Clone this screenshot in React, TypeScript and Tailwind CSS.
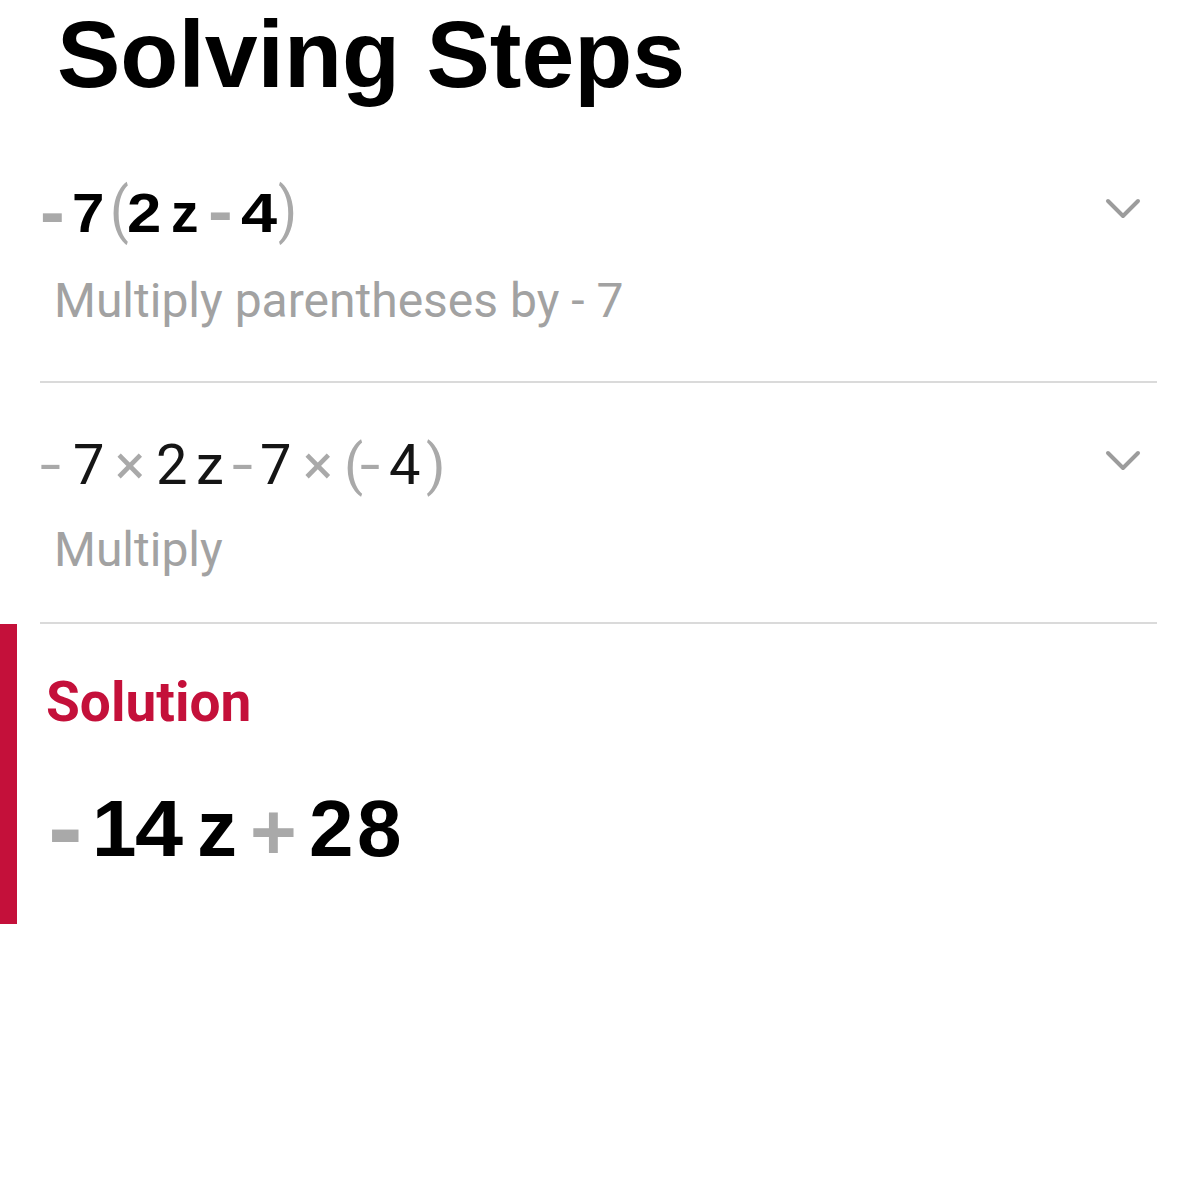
import React from "react";

type Tok = { t: string; w: number; c?: string; x?: string };

const GRAY = "text-[#a9a9a9]";

function Chevron() {
  return (
    <svg width="36" height="24" viewBox="0 0 36 24" className="shrink-0">
      <polyline
        points="3,4 18,19 33,4"
        fill="none"
        stroke="#9c9c9c"
        strokeWidth="4"
        strokeLinecap="round"
        strokeLinejoin="round"
      />
    </svg>
  );
}

function MathLine({ toks, cls }: { toks: Tok[]; cls: string }) {
  return (
    <div className={`flex items-baseline leading-none ${cls}`}>
      {toks.map((k, i) => (
        <span
          key={i}
          className={`inline-block shrink-0 ${k.c ?? ""} ${k.x ?? ""}`}
          style={{ width: k.w }}
        >
          {k.t}
        </span>
      ))}
    </div>
  );
}

const row1: Tok[] = [
  { t: "-", w: 32, c: GRAY, x: "origin-left scale-x-[1.35] scale-y-[1.3] -translate-y-[2px]" },
  { t: "7", w: 38, c: "text-black", x: "origin-left scale-x-[1.06]" },
  { t: "(", w: 17, c: `${GRAY} font-['Roboto'] font-normal`, x: "origin-bottom scale-y-[1.1]" },
  { t: "2", w: 44, c: "text-black", x: "origin-left scale-x-[1.12]" },
  { t: "z", w: 37, c: "text-black" },
  { t: "-", w: 33, c: GRAY, x: "origin-left scale-x-[1.35] scale-y-[1.15] -translate-y-[2px]" },
  { t: "4", w: 37, c: "text-black", x: "origin-left scale-x-[1.18]" },
  { t: ")", w: 20, c: `${GRAY} font-['Roboto'] font-normal`, x: "origin-bottom scale-y-[1.1]" },
];

const row2: Tok[] = [
  { t: "-", w: 33, c: GRAY, x: "origin-left scale-x-[1.35]" },
  { t: "7", w: 42, c: "text-[#151515]" },
  { t: "×", w: 41, c: GRAY },
  { t: "2", w: 40, c: "text-[#151515]" },
  { t: "z", w: 36, c: "text-[#151515]" },
  { t: "-", w: 28, c: GRAY, x: "origin-left scale-x-[1.35]" },
  { t: "7", w: 43, c: "text-[#151515]" },
  { t: "×", w: 41, c: GRAY },
  { t: "(", w: 16, c: GRAY },
  { t: "-", w: 29, c: GRAY, x: "origin-left scale-x-[1.3]" },
  { t: "4", w: 37, c: "text-[#151515]" },
  { t: ")", w: 21, c: GRAY },
];

const sol: Tok[] = [
  { t: "-", w: 44, c: GRAY, x: "origin-left scale-x-[1.3] scale-y-[1.3] -translate-y-[1px]" },
  { t: "1", w: 43, c: "text-black" },
  { t: "4", w: 62, c: "text-black", x: "origin-left scale-x-[1.08]" },
  { t: "z", w: 53, c: "text-black" },
  { t: "+", w: 59, c: GRAY, x: "translate-y-[3px]" },
  { t: "2", w: 48, c: "text-black" },
  { t: "8", w: 55, c: "text-black" },
];

export default function App() {
  return (
    <div className="w-[1199px] h-[1200px] bg-white pt-[7px]">
      <div className="pl-[57px] h-[95px] leading-none text-[95px] font-bold text-black font-['Liberation_Sans',Arial,sans-serif]">
        Solving Steps
      </div>

      <div className="ml-[40px] mr-[42px] pt-[84px] pb-[56px] border-b-2 border-[#dadada]">
        <div className="flex items-start justify-between">
          <MathLine
            toks={row1}
            cls="h-[55px] text-[55px] font-bold font-['Liberation_Sans',Arial,sans-serif]"
          />
          <div className="mt-[11px] mr-[16px]">
            <Chevron />
          </div>
        </div>
        <div className="mt-[36px] pl-[14px] h-[48px] leading-none text-[48px] text-[#a2a2a2] font-['Roboto',sans-serif]">
          Multiply parentheses by - 7
        </div>
      </div>

      <div className="ml-[40px] mr-[42px] pt-[54px] pb-[48px] border-b-2 border-[#dadada]">
        <div className="flex items-start justify-between">
          <MathLine
            toks={row2}
            cls="h-[56px] text-[56px] font-normal font-['Roboto',sans-serif]"
          />
          <div className="mt-[12px] mr-[16px]">
            <Chevron />
          </div>
        </div>
        <div className="mt-[33px] pl-[14px] h-[48px] leading-none text-[48px] text-[#a2a2a2] font-['Roboto',sans-serif]">
          Multiply
        </div>
      </div>

      <div className="flex h-[300px]">
        <div className="w-[17px] bg-[#c4103a] shrink-0" />
        <div className="ml-[29px] pt-[51px]">
          <div className="h-[54px] leading-none text-[55px] font-bold text-[#c4103a] font-['Roboto',sans-serif]">
            Solution
          </div>
          <div className="mt-[60px] ml-[2px]">
            <MathLine
              toks={sol}
              cls="h-[80px] text-[80px] font-bold font-['Liberation_Sans',Arial,sans-serif]"
            />
          </div>
        </div>
      </div>
    </div>
  );
}
